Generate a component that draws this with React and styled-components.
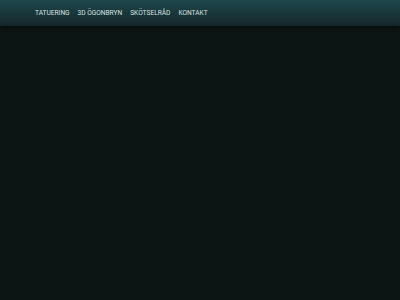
import styled, { createGlobalStyle } from 'styled-components';

const GlobalStyle = createGlobalStyle`
  html, body {
    margin: 0;
    padding: 0;
    background: #0c1513;
  }
  body {
    font-family: Roboto, "Liberation Sans", sans-serif;
  }
`;

const Page = styled.div`
  width: 400px;
  height: 300px;
  background: #0c1513;
  overflow: hidden;
`;

const Header = styled.header`
  height: 26px;
  background: linear-gradient(to bottom, #1e474c 0%, #193539 55%, #14262a 100%);
  box-shadow: 0 2px 4px rgba(0, 0, 0, 0.45);
  display: flex;
  align-items: center;
  padding-left: 35px;
`;

const Nav = styled.nav`
  display: flex;
  gap: 8px;
`;

const NavLink = styled.a`
  font-family: Roboto, sans-serif;
  font-size: 6.6px;
  font-weight: 400;
  color: #d8e0e0;
  text-transform: uppercase;
  text-decoration: none;
  line-height: 1;
  padding-top: 1px;
`;

const links = ['Tatuering', '3D Ögonbryn', 'Skötselråd', 'Kontakt'];

export default function App() {
  return (
    <Page>
      <GlobalStyle />
      <Header>
        <Nav>
          {links.map((l) => (
            <NavLink key={l} href="#">{l}</NavLink>
          ))}
        </Nav>
      </Header>
    </Page>
  );
}
